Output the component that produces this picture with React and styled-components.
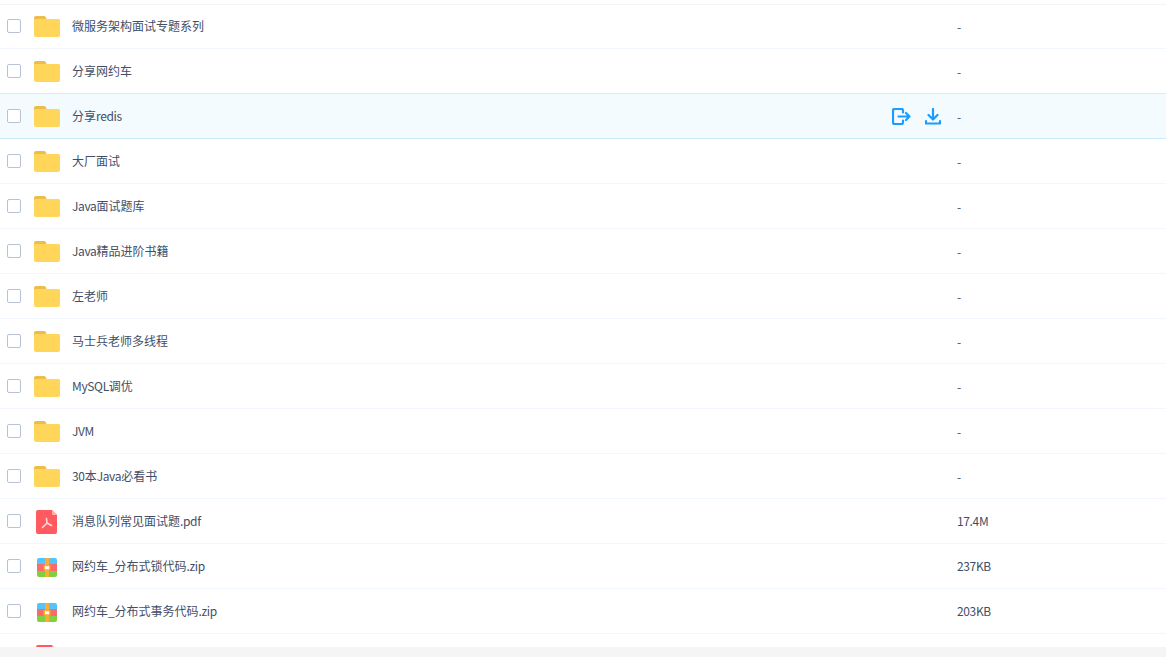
import React from 'react'
import styled, { createGlobalStyle } from 'styled-components'

const GlobalStyle = createGlobalStyle`
  html, body {
    margin: 0;
    padding: 0;
    background: #fff;
    overflow: hidden;
  }
  body {
    font-family: "Noto Sans CJK SC", "Liberation Sans", sans-serif;
  }
`

const files = [
  { name: '微服务架构面试专题系列', size: '-', type: 'folder' },
  { name: '分享网约车', size: '-', type: 'folder' },
  { name: '分享redis', size: '-', type: 'folder', active: true },
  { name: '大厂面试', size: '-', type: 'folder' },
  { name: 'Java面试题库', size: '-', type: 'folder' },
  { name: 'Java精品进阶书籍', size: '-', type: 'folder' },
  { name: '左老师', size: '-', type: 'folder' },
  { name: '马士兵老师多线程', size: '-', type: 'folder' },
  { name: 'MySQL调优', size: '-', type: 'folder' },
  { name: 'JVM', size: '-', type: 'folder' },
  { name: '30本Java必看书', size: '-', type: 'folder' },
  { name: '消息队列常见面试题.pdf', size: '17.4M', type: 'pdf' },
  { name: '网约车_分布式锁代码.zip', size: '237KB', type: 'zip' },
  { name: '网约车_分布式事务代码.zip', size: '203KB', type: 'zip' },
  { name: '', size: '', type: 'pdf' },
]

function FolderIcon() {
  return (
    <svg width="26" height="21" viewBox="0 0 26 21">
      <path d="M0 2a2 2 0 0 1 2-2h8a2 2 0 0 1 1.800 1.200L13 4H0z" fill="#ecbd4a" />
      <path d="M0 4.500A1.500 1.500 0 0 1 1.500 3H24.500A1.500 1.500 0 0 1 26 4.500V19a2 2 0 0 1-2 2H2a2 2 0 0 1-2-2z" fill="#ffd659" />
    </svg>
  )
}

function PdfIcon() {
  return (
    <PdfSvg width="21" height="24" viewBox="0 0 21 24">
      <path d="M2 0H16L21 5V22a2 2 0 0 1-2 2H2a2 2 0 0 1-2-2V2a2 2 0 0 1 2-2z" fill="#ff5a5f" />
      <path d="M16 0L21 5H17a1 1 0 0 1-1-1z" fill="#ffb3b3" />
      <path d="M10.500 8.500L11 13L15.500 15.500M11 13L6.500 17.500" stroke="#ffd9d9" strokeWidth="1.600" fill="none" strokeLinecap="round" strokeLinejoin="round" />
    </PdfSvg>
  )
}

function ZipIcon() {
  return (
    <svg width="20" height="19" viewBox="0 0 20 19">
      <path d="M2 0H18a2 2 0 0 1 2 2V6H0V2a2 2 0 0 1 2-2z" fill="#54c5fa" />
      <rect y="6" width="20" height="7" fill="#fb6a6a" />
      <path d="M0 13H20V17a2 2 0 0 1-2 2H2a2 2 0 0 1-2-2z" fill="#80cf3f" />
      <rect x="8" width="4" height="19" fill="#fbac34" />
      <rect x="6.500" y="7" width="7" height="5.500" fill="#fbac34" />
      <rect x="8" y="8.200" width="4" height="3" fill="#fff" />
    </svg>
  )
}

function ShareIcon() {
  return (
    <svg width="19" height="17" viewBox="0 0 19 17" fill="none" stroke="#1a9dff" strokeWidth="2.200" strokeLinecap="round" strokeLinejoin="round">
      <path d="M11 4.500V2.500A1.500 1.500 0 0 0 9.500 1H2.500A1.500 1.500 0 0 0 1 2.500V14.500A1.500 1.500 0 0 0 2.500 16H9.500a1.500 1.500 0 0 0 1.500-1.500V12.500" />
      <path d="M6.500 8.500H17.500M14 5l3.500 3.500L14 12" />
    </svg>
  )
}

function DownloadIcon() {
  return (
    <svg width="16" height="17" viewBox="0 0 16 17" fill="none" stroke="#1a9dff" strokeWidth="2.200" strokeLinecap="round" strokeLinejoin="round">
      <path d="M8 1V10.500M3.500 7l4.500 4.500L12.500 7" />
      <path d="M1 13V15.500H15V13" />
    </svg>
  )
}

const icons = { folder: FolderIcon, pdf: PdfIcon, zip: ZipIcon }
const iconDrop = { folder: '1px', pdf: '2px', zip: '3px' }

// latin runs sit tighter than the CJK ones
function Label({ text }) {
  return text
    .split(/([\x00-\x7f]+)/)
    .filter(Boolean)
    .map((part, i) => (/^[\x00-\x7f]/.test(part) ? <Latin key={i}>{part}</Latin> : part))
}

export default function App() {
  return (
    <>
      <GlobalStyle />
      <Page>
        <List>
          <TopEdge />
          {files.map((file) => {
            const Icon = icons[file.type]
            return (
              <Row key={file.name} $active={file.active}>
                <Checkbox />
                <IconCell $drop={iconDrop[file.type]}>
                  <Icon />
                </IconCell>
                <Name>
                  <Label text={file.name} />
                </Name>
                {file.active && (
                  <Actions>
                    <ShareIcon />
                    <DownloadIcon />
                  </Actions>
                )}
                <Size $dash={file.size === '-'}>
                  <Label text={file.size} />
                </Size>
              </Row>
            )
          })}
        </List>
      </Page>
      <Footer />
    </>
  )
}

const Page = styled.div`
  height: 647px;
  overflow: hidden;
`

const List = styled.div`
  display: flex;
  flex-direction: column;
`

const TopEdge = styled.div`
  height: 4px;
  flex: none;
  margin-bottom: -1px;
  border-bottom: 1px solid #f2f4f7;
`

const Row = styled.div`
  display: flex;
  align-items: center;
  flex: none;
  height: 44px;
  padding-left: 7px;
  background: ${(p) => (p.$active ? '#f4fbff' : 'transparent')};
  border-bottom: 1px solid ${(p) => (p.$active ? '#c9eaff' : '#f2f6fd')};
  box-shadow: ${(p) => (p.$active ? '0 -1px 0 #daebf8' : 'none')};
  color: #424e67;
  font-size: 12px;
`

const Checkbox = styled.span`
  flex: none;
  width: 12px;
  height: 12px;
  border: 1px solid #b7c3d4;
  border-radius: 2px;
  background: #fff;
`

const IconCell = styled.span`
  flex: none;
  display: flex;
  justify-content: center;
  align-items: center;
  width: 26px;
  margin: ${(p) => p.$drop} 12px 0 13px;
`

const PdfSvg = styled.svg`
  margin-right: 1px;
`

const Name = styled.span`
  flex: 1;
  margin-bottom: 2px;
  white-space: nowrap;
`

const Latin = styled.span`
  letter-spacing: -0.35px;
`

const Actions = styled.span`
  display: flex;
  align-items: center;
  gap: 14px;
  margin-top: 1px;
  margin-right: 16px;
`

const Size = styled.span`
  flex: none;
  width: 209px;
  margin-bottom: ${(p) => (p.$dash ? '0' : '2px')};
`

const Footer = styled.div`
  height: 10px;
  background: #f5f5f6;
`
